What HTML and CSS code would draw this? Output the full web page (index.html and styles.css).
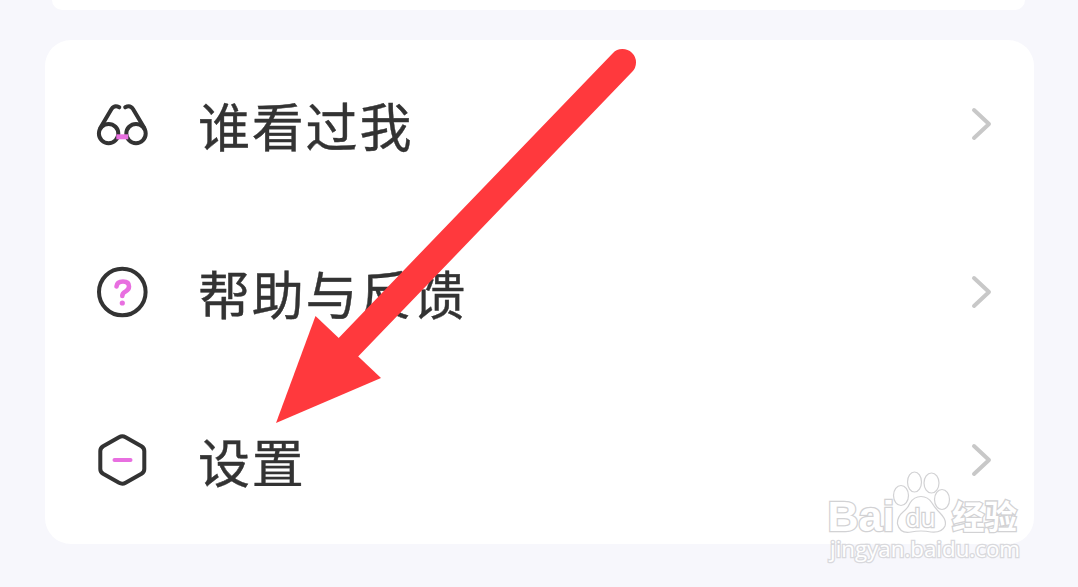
FILE: index.html
```html
<!DOCTYPE html>
<html lang="zh-CN">
<head>
  <meta charset="UTF-8">
  <meta name="viewport" content="width=device-width, initial-scale=1.0">
  <title>设置</title>
  <link rel="stylesheet" href="styles.css">
</head>
<body>
  <div class="card card-prev"></div>

  <main class="card menu">
    <div class="menu-item">
      <svg class="icon" viewBox="0 0 56 56">
        <circle cx="13.600" cy="37.600" r="9.700"/>
        <circle cx="41" cy="37.600" r="9.700"/>
        <path d="M5.300 32 L16.500 13 Q19.500 8.500 24.300 11.300"/>
        <path d="M49.300 32 L38 13 Q35 8.500 30.200 11.300"/>
        <path class="pink bridge" d="M21.300 40.800 H33.300"/>
      </svg>
      <span class="label">谁看过我</span>
      <svg class="chevron" viewBox="0 0 24 36"><path d="M4 4 L19 18 L4 32"/></svg>
    </div>

    <div class="menu-item">
      <svg class="icon" viewBox="0 0 56 56">
        <circle cx="27.300" cy="28" r="23.300"/>
        <path class="pink mark" d="M21.500 22.500 Q22 17.500 28 17.500 Q34 17.500 34 22.500 Q34 25.500 30.500 27.500 Q27.300 29 27.300 32"/>
        <circle class="dot" cx="27.300" cy="39" r="2.600"/>
      </svg>
      <span class="label">帮助与反馈</span>
      <svg class="chevron" viewBox="0 0 24 36"><path d="M4 4 L19 18 L4 32"/></svg>
    </div>

    <div class="menu-item">
      <svg class="icon" viewBox="0 0 56 56">
        <path d="M24 5.200 Q27.300 3.400 30.600 5.200 L46.500 14.200 Q49.300 16 49.300 19 V37 Q49.300 40 46.500 41.800 L30.600 50.800 Q27.300 52.600 24 50.800 L8.100 41.800 Q5.300 40 5.300 37 V19 Q5.300 16 8.100 14.200 Z"/>
        <path class="pink" d="M19.500 28 H35.500"/>
      </svg>
      <span class="label">设置</span>
      <svg class="chevron" viewBox="0 0 24 36"><path d="M4 4 L19 18 L4 32"/></svg>
    </div>
  </main>

  <svg class="arrow" viewBox="0 0 1078 587">
    <path class="arrow-line" d="M622.500 62.500 L340 356"/>
    <path class="arrow-head" d="M276 423 L315.500 316 L381 378 Z"/>
  </svg>

  <svg class="watermark" viewBox="0 0 210 100">
    <text class="wm-logo" x="5.500" y="65.500" textLength="67" lengthAdjust="spacingAndGlyphs">Bai</text>
    <ellipse cx="79" cy="30.500" rx="7.500" ry="10"/>
    <ellipse cx="92.500" cy="17" rx="7" ry="10"/>
    <ellipse cx="109.500" cy="18" rx="7.500" ry="10"/>
    <ellipse cx="120" cy="34.500" rx="7.500" ry="10"/>
    <path d="M99 31.500 Q106 31.500 110 38 Q113 43 118 48 Q125 55 123 61 Q120 68 109 67 Q99 65 89 67 Q78 69 75.500 59 Q75 52 81 47 Q86 43 88 38 Q92 31.500 99 31.500 Z"/>
    <text class="wm-du" x="83.500" y="61.500" textLength="30" lengthAdjust="spacingAndGlyphs">du</text>
    <text class="wm-cn" x="130" y="63.500" textLength="65" lengthAdjust="spacingAndGlyphs">经验</text>
    <text class="wm-url" x="8" y="92" textLength="190" lengthAdjust="spacingAndGlyphs">jingyan.baidu.com</text>
  </svg>
</body>
</html>
```
FILE: styles.css
```css
* {
  box-sizing: border-box;
}

body {
  margin: 0;
  height: 587px;
  padding: 0 44px 0 45px;
  overflow: hidden;
  background-color: #f7f7fc;
  color: #333;
  font-family: "Noto Sans CJK SC", sans-serif;
}

.card {
  background-color: #fff;
  border-radius: 26px;
}

.card-prev {
  height: 10px;
  margin: 0 9px 30px 7px;
  border-radius: 0 0 18px 18px;
}

.menu {
  height: 504px;
}

.menu-item {
  display: flex;
  align-items: center;
  height: 168px;
  padding: 0 40px 0 50px;
}

.icon {
  width: 56px;
  height: 56px;
  fill: none;
  stroke: #333;
  stroke-width: 4;
  stroke-linecap: round;
  stroke-linejoin: round;
}

.icon .pink {
  stroke: #e86fe0;
}

.icon .bridge {
  stroke-width: 5;
  stroke-linecap: butt;
}

.icon .mark {
  stroke-width: 4.6;
}

.icon .dot {
  fill: #e86fe0;
  stroke: none;
}

.label {
  flex: 1;
  margin-left: 47px;
  padding-top: 1px;
  font-size: 52px;
  line-height: 76px;
  letter-spacing: 1.8px;
  -webkit-text-stroke: 0.4px #333;
}

.chevron {
  width: 24px;
  height: 36px;
  fill: none;
  stroke: #c8c8c8;
  stroke-width: 4;
  stroke-linecap: round;
  stroke-linejoin: round;
}

.arrow {
  position: absolute;
  top: 0;
  left: 0;
  width: 1078px;
  height: 587px;
}

.arrow-line {
  stroke: #ff393d;
  stroke-width: 27;
  stroke-linecap: round;
}

.arrow-head {
  fill: #ff393d;
}

.watermark {
  position: absolute;
  left: 822px;
  top: 465px;
  width: 210px;
  height: 100px;
  fill: #fff;
  stroke: #d2d2d4;
  stroke-width: 1.2;
}

.watermark text {
  paint-order: stroke;
  stroke-width: 2.6;
}

.wm-logo {
  font: bold 43px "Liberation Sans", sans-serif;
}

.watermark .wm-du {
  font: 25px "Open Sans", sans-serif;
}

.wm-cn {
  font: bold 33px "Noto Sans CJK SC", sans-serif;
}

.watermark .wm-url {
  font: 22px "Open Sans", sans-serif;
  stroke: #d9d9dd;
}
```
